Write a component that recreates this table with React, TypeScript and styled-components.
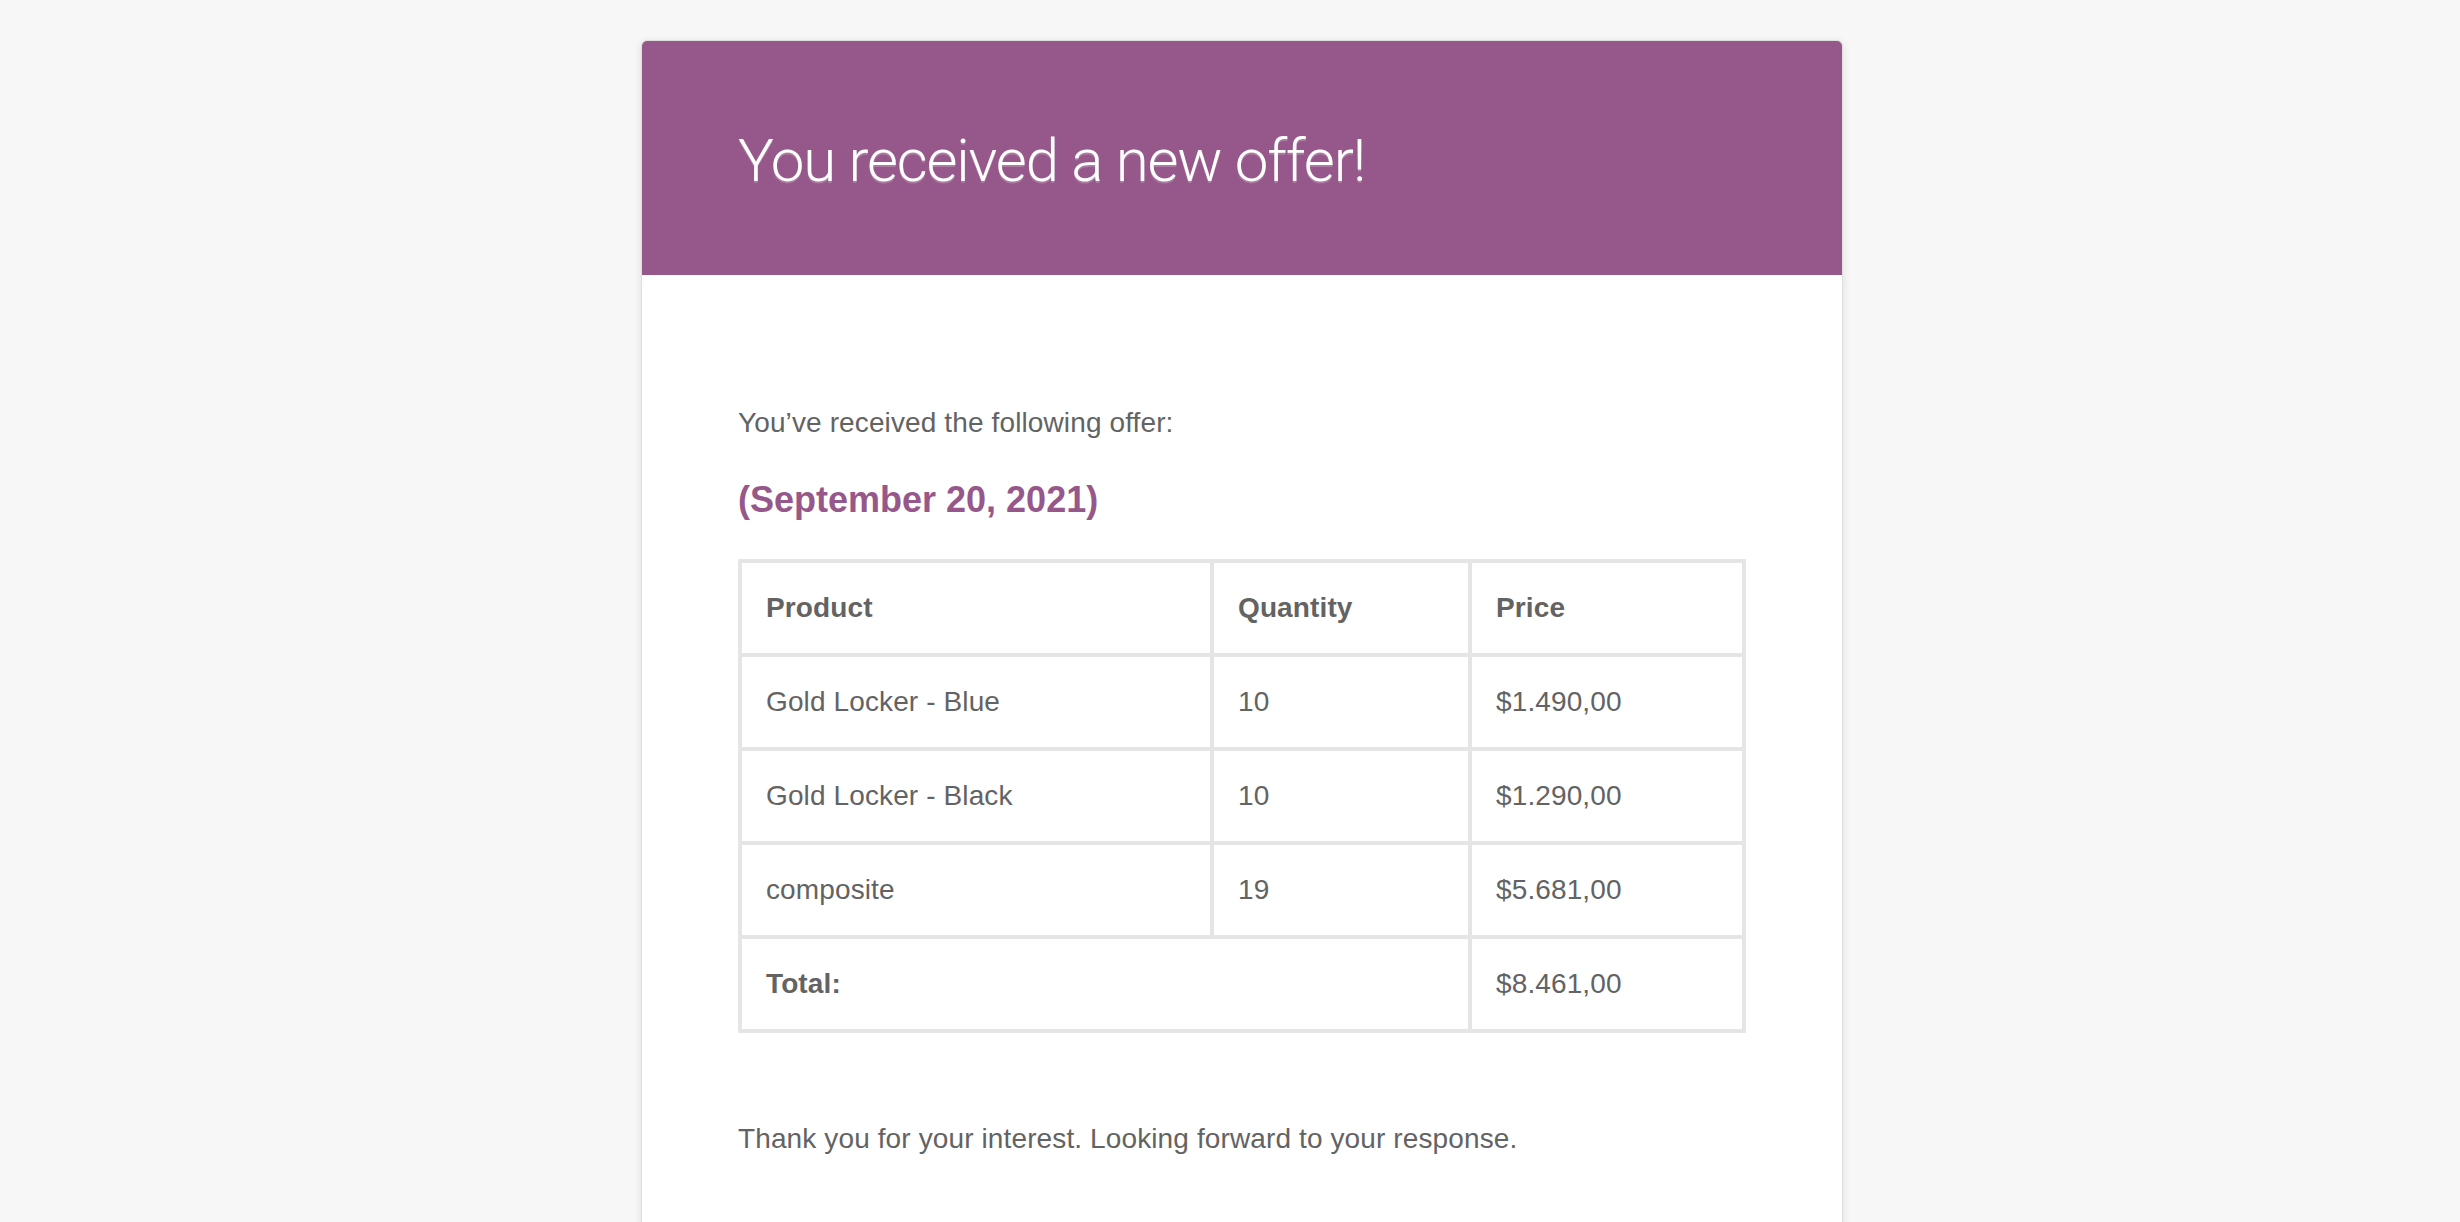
import styled, { createGlobalStyle } from "styled-components";

interface OfferLine {
  product: string;
  quantity: number;
  price: string;
}

const lines: OfferLine[] = [
  { product: "Gold Locker - Blue", quantity: 10, price: "$1.490,00" },
  { product: "Gold Locker - Black", quantity: 10, price: "$1.290,00" },
  { product: "composite", quantity: 19, price: "$5.681,00" },
];

const GlobalStyle = createGlobalStyle`
  html, body {
    margin: 0;
    padding: 0;
    background-color: #f7f7f7;
  }
  body {
    font-family: "Liberation Sans", Arial, sans-serif;
    overflow: hidden;
  }
`;

const PageWrapper = styled.div`
  min-height: 100vh;
  display: flex;
  justify-content: center;
  align-items: flex-start;
  padding: 40px 0 0 24px;
  box-sizing: border-box;
`;

const Card = styled.div`
  width: 1200px;
  background-color: #ffffff;
  border: 1px solid #dedede;
  border-radius: 6px;
  box-shadow: 0 2px 8px rgba(0, 0, 0, 0.1);
  overflow: hidden;
`;

const Header = styled.div`
  background-color: #96588a;
  padding: 75px 96px 69px;
`;

const Title = styled.h1`
  margin: 0;
  font-family: Roboto, "Liberation Sans", Arial, sans-serif;
  font-size: 60px;
  font-weight: 300;
  letter-spacing: -1.2px;
  line-height: 90px;
  color: #ffffff;
  text-shadow: 0 2px 0 #ab79a1;
`;

const Body = styled.div`
  padding: 127px 96px 64px;
  color: #636363;
  font-size: 28px;
  line-height: 42px;
  letter-spacing: 0.12px;
`;

const Paragraph = styled.p`
  margin: 0 0 32px;
`;

const DateHeading = styled.h2`
  margin: 0 0 36px;
  color: #96588a;
  font-size: 36px;
  font-weight: bold;
  line-height: 47px;
  letter-spacing: 0;
`;

const TableWrap = styled.div`
  margin-bottom: 85px;
`;

const Table = styled.table`
  width: 1008px;
  table-layout: fixed;
  border-collapse: separate;
  border-spacing: 0;
  border: 2px solid #e5e5e5;
  color: #636363;
`;

const Cell = styled.td<{ $bold?: boolean }>`
  padding: 24px;
  border: 2px solid #e5e5e5;
  text-align: left;
  vertical-align: middle;
  font-size: 28px;
  line-height: 42px;
  font-weight: ${(p) => (p.$bold ? "bold" : "normal")};
`;

const HeadCell = styled(Cell).attrs({ as: "th" })``;

export default function App() {
  return (
    <>
      <GlobalStyle />
      <PageWrapper>
        <Card>
          <Header>
            <Title>You received a new offer!</Title>
          </Header>
          <Body>
            <Paragraph>You’ve received the following offer:</Paragraph>
            <DateHeading>(September 20, 2021)</DateHeading>
            <TableWrap>
              <Table>
                <colgroup>
                  <col style={{ width: 472 }} />
                  <col style={{ width: 258 }} />
                  <col style={{ width: 274 }} />
                </colgroup>
                <thead>
                  <tr>
                    <HeadCell $bold>Product</HeadCell>
                    <HeadCell $bold>Quantity</HeadCell>
                    <HeadCell $bold>Price</HeadCell>
                  </tr>
                </thead>
                <tbody>
                  {lines.map((line) => (
                    <tr key={line.product}>
                      <Cell>{line.product}</Cell>
                      <Cell>{line.quantity}</Cell>
                      <Cell>{line.price}</Cell>
                    </tr>
                  ))}
                </tbody>
                <tfoot>
                  <tr>
                    <HeadCell $bold colSpan={2}>
                      Total:
                    </HeadCell>
                    <Cell>$8.461,00</Cell>
                  </tr>
                </tfoot>
              </Table>
            </TableWrap>
            <Paragraph>
              Thank you for your interest. Looking forward to your response.
            </Paragraph>
          </Body>
        </Card>
      </PageWrapper>
    </>
  );
}
